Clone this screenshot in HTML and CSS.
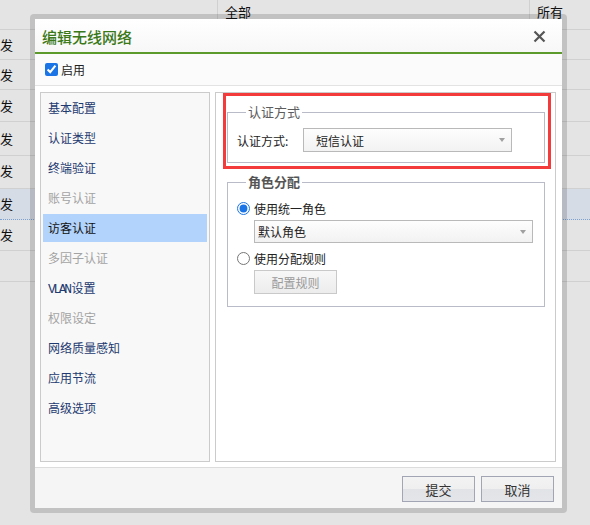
FILE: index.html
```html
<!DOCTYPE html>
<html lang="zh-CN">
<head>
<meta charset="utf-8">
<title>编辑无线网络</title>
<link rel="stylesheet" href="styles.css">
</head>
<body>
<div class="page">
  <div class="table">
    <div class="trow thead"><div class="c1"></div><div class="c2">全部</div><div class="c3">所有</div></div>
    <div class="trow"><div class="c1">发</div><div class="c2"></div><div class="c3"></div></div>
    <div class="trow"><div class="c1">发</div><div class="c2"></div><div class="c3"></div></div>
    <div class="trow"><div class="c1">发</div><div class="c2"></div><div class="c3"></div></div>
    <div class="trow"><div class="c1">发</div><div class="c2"></div><div class="c3"></div></div>
    <div class="trow"><div class="c1">发</div><div class="c2"></div><div class="c3"></div></div>
    <div class="trow selected"><div class="c1">发</div><div class="c2"></div><div class="c3"></div></div>
    <div class="trow"><div class="c1">发</div><div class="c2"></div><div class="c3"></div></div>
    <div class="trow"><div class="c1"></div><div class="c2"></div><div class="c3"></div></div>
  </div>

  <div class="dialog">
    <div class="dlg-title">
      <span class="title-text">编辑无线网络</span>
      <svg class="close" width="13" height="13" viewBox="0 0 13 13"><path d="M1.5 1.5 L11.5 11.5 M11.5 1.5 L1.5 11.5" stroke="#555" stroke-width="2.2" fill="none"/></svg>
    </div>
    <div class="enable-row">
      <label class="check"><input type="checkbox" checked><span>启用</span></label>
    </div>
    <div class="dlg-body">
      <ul class="nav">
        <li class="nav-item">基本配置</li>
        <li class="nav-item">认证类型</li>
        <li class="nav-item">终端验证</li>
        <li class="nav-item disabled">账号认证</li>
        <li class="nav-item active">访客认证</li>
        <li class="nav-item disabled">多因子认证</li>
        <li class="nav-item"><span class="latin">VLAN</span>设置</li>
        <li class="nav-item disabled">权限设定</li>
        <li class="nav-item">网络质量感知</li>
        <li class="nav-item">应用节流</li>
        <li class="nav-item">高级选项</li>
      </ul>
      <div class="content">
        <div class="highlight">
          <fieldset class="group auth">
            <legend>认证方式</legend>
            <div class="field-row">
              <span class="field-label">认证方式:</span>
              <div class="select sel-auth"><span>短信认证</span><i class="caret"></i></div>
            </div>
          </fieldset>
        </div>
        <fieldset class="group role">
          <legend>角色分配</legend>
          <label class="radio"><input type="radio" name="role" checked><span>使用统一角色</span></label>
          <div class="select sel-role"><span>默认角色</span><i class="caret"></i></div>
          <label class="radio radio2"><input type="radio" name="role"><span>使用分配规则</span></label>
          <button class="btn btn-disabled" disabled>配置规则</button>
        </fieldset>
      </div>
    </div>
    <div class="dlg-footer">
      <button class="btn btn-foot">提交</button>
      <button class="btn btn-foot">取消</button>
    </div>
  </div>
</div>
</body>
</html>
```

FILE: styles.css
```css
* { box-sizing: border-box; }
html, body { margin: 0; padding: 0; }
body {
  width: 590px;
  height: 525px;
  overflow: hidden;
  background: #e4e4e4;
  font-family: "Noto Sans CJK SC", "Microsoft YaHei", sans-serif;
  font-size: 12px;
  color: #222;
}
.page { position: relative; width: 590px; height: 525px; overflow: hidden; }

/* background table */
.table { width: 590px; }
.trow { display: flex; height: 31px; border-bottom: 1px solid #d0d0d0; }
.trow > div { line-height: 30px; font-size: 13px; color: #111; }
.c1 { width: 218px; border-right: 1px solid #d0d0d0; }
.c2 { width: 312px; border-right: 1px solid #d0d0d0; padding-left: 7px; }
.c3 { flex: 1; padding-left: 7px; }
.thead { height: 30px; }
.thead > div { line-height: 23px; }
.trow:nth-child(2), .trow:nth-child(3) { height: 30px; }
.trow:nth-child(2) > div, .trow:nth-child(3) > div { line-height: 29px; }
.trow:nth-child(4) { height: 32px; }
.trow:nth-child(4) > div { line-height: 31px; }
.trow:nth-child(5) { height: 34px; }
.trow:nth-child(5) > div { line-height: 33px; }
.trow:nth-child(6) { height: 33px; }
.trow:nth-child(6) > div { line-height: 30px; }
.trow.selected { background: #d6dce5; border-bottom: 1px dotted #7fa1cd; }

/* dialog */
.dialog {
  position: absolute;
  left: 30px;
  top: 14px;
  width: 537px;
  height: 499px;
  border: 5px solid rgba(0, 0, 0, 0.15);
  border-radius: 4px;
  background: #fff;
  background-clip: padding-box;
  display: flex;
  flex-direction: column;
}
.dlg-title {
  height: 35px;
  flex: none;
  display: flex;
  align-items: center;
  justify-content: space-between;
  padding: 1px 16px 0 7px;
  background: linear-gradient(#ffffff, #f7f7f7);
  border-bottom: 2px solid #5b9a2b;
}
.title-text { font-size: 15px; color: #3a7818; font-weight: 500; }
.close { display: block; }

.enable-row {
  height: 32px;
  flex: none;
  display: flex;
  align-items: center;
  padding-left: 10px;
  background: #fbfbfb;
  border-bottom: 1px solid #e3e3e3;
}
.check { display: flex; align-items: center; gap: 3px; font-size: 12px; color: #222; }
.check input { margin: 0; width: 13px; height: 13px; accent-color: #1a74e6; }

.dlg-body {
  flex: 1;
  display: flex;
  gap: 5px;
  padding: 6px 6px 5px 5px;
}
.nav {
  list-style: none;
  margin: 0;
  width: 170px;
  flex: none;
  padding: 1px 2px;
  border: 1px solid #cbcbcb;
  background: #f8f8f8;
}
.nav-item {
  height: 28px;
  line-height: 28px;
  margin-bottom: 2px;
  padding-left: 5px;
  color: #1e3a70;
  font-size: 12px;
}
.nav-item.disabled { color: #a3a3a3; }
.nav-item.active { background: #b2d3fb; color: #111; }
.latin { font-family: "Liberation Mono", monospace; font-size: 13px; letter-spacing: -2.4px; margin-right: 2px; }

.content {
  flex: 1;
  border: 1px solid #cbcbcb;
  background: #fff;
  padding: 0 4px 0 7px;
}
.highlight {
  border: 3px solid #f33b3b;
  padding: 0 3px 3px 1px;
}
.group {
  margin: 0;
  border: 1px solid #b9bbc9;
  padding: 8px 9px 10px 9px;
  min-width: 0;
}
.group legend {
  margin-left: 9px;
  padding: 0 2px;
  font-size: 13px;
  line-height: 16px;
  height: 16px;
}
.auth { margin-top: 8px; }
.auth legend { color: #5c5c5c; }
.role { margin: 5px 6px 0 4px; padding: 8px 11px 12px 9px; }
.role legend { color: #555; font-weight: bold; }

.field-row { display: flex; align-items: center; }
.field-label { width: 66px; color: #222; }
.select {
  position: relative;
  height: 24px;
  border: 1px solid #b9b9b9;
  background: linear-gradient(#fdfdfd, #f2f2f2);
  display: flex;
  align-items: center;
  color: #222;
}
.sel-auth { width: 209px; padding-left: 12px; }
.sel-role { margin: 2px 0 0 17px; height: 23px; padding-left: 3px; }
.caret {
  position: absolute;
  right: 6px;
  top: 50%;
  margin-top: -2px;
  width: 0;
  height: 0;
  border-left: 3.5px solid transparent;
  border-right: 3.5px solid transparent;
  border-top: 4px solid #a0a0a0;
}
.radio { display: flex; align-items: center; gap: 4px; height: 20px; color: #222; }
.radio input { margin: 0; width: 13px; height: 13px; accent-color: #1a74e6; }
.radio2 { margin-top: 5px; }

.btn {
  font-family: inherit;
  font-size: 12px;
  padding: 0;
  cursor: default;
}
.btn-disabled {
  display: block;
  margin: 2px 0 0 17px;
  width: 83px;
  height: 24px;
  border: 1px solid #c9c9c9;
  background: linear-gradient(#f7f7f7, #ececec);
  color: #9a9a9a;
}

.dlg-footer {
  height: 41px;
  flex: none;
  display: flex;
  justify-content: flex-end;
  align-items: flex-start;
  gap: 6px;
  padding: 8px 8px 0 0;
  background: #f5f5f5;
  border-top: 1px solid #dcdcdc;
}
.btn-foot {
  width: 73px;
  height: 26px;
  border: 1px solid #a2a5b3;
  background: linear-gradient(#f3f3f3 0%, #efefef 50%, #e2e3e6 51%, #e4e5e8 100%);
  color: #333;
  font-size: 13px;
}
```
